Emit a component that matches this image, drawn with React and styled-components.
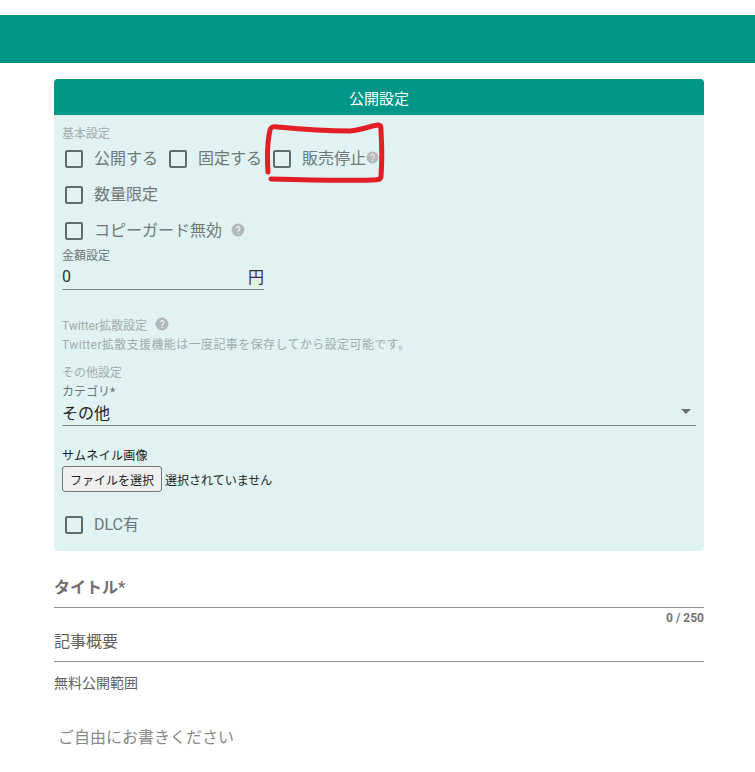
import styled, { createGlobalStyle } from "styled-components";

const GlobalStyle = createGlobalStyle`
	html, body {
		margin: 0;
		padding: 0;
		background: #fff;
		font-family: Roboto, "Noto Sans CJK JP", sans-serif;
	}
`;

const Page = styled.div`
	width: 755px;
	height: 772px;
	overflow: hidden;
	padding-top: 15px;
	box-sizing: border-box;
`;

const TopBar = styled.div`
	height: 48px;
	background: #009688;
`;

const Main = styled.main`
	width: 650px;
	margin: 16px 0 0 54px;
`;

const Settings = styled.section`
	position: relative;
	border-radius: 4px;
	background: #e0f2f1;
`;

const SettingsHeader = styled.h2`
	margin: 0;
	height: 36px;
	display: flex;
	align-items: center;
	justify-content: center;
	border-radius: 4px 4px 0 0;
	background: #009688;
	color: #fff;
	font-size: 15px;
	font-weight: 400;
`;

const SettingsBody = styled.div`
	height: 436px;
	padding: 8px 8px 0;
	box-sizing: border-box;
	display: flex;
	flex-direction: column;
`;

const Muted = styled.div`
	height: 18px;
	margin-top: ${(p) => p.$top || 0}px;
	display: flex;
	align-items: center;
	gap: 8px;
	color: #a2abaa;
	font-size: 12px;
	letter-spacing: ${(p) => p.$spacing || 0}px;
	white-space: nowrap;
`;

const CheckRow = styled.div`
	height: 36px;
	display: flex;
	align-items: center;
	margin-top: ${(p) => p.$top || 0}px;
`;

const Check = styled.label`
	display: flex;
	align-items: center;
	margin-right: ${(p) => p.$right || 0}px;
	color: #6f7877;
	font-size: 16px;
`;

const Box = styled.span`
	width: 14px;
	height: 14px;
	margin: 3px 11px 0 3px;
	border: 2px solid #5d6f6d;
	border-radius: 2px;
	flex: none;
`;

const HelpSlot = styled.span`
	display: flex;
	margin-left: 9px;
	margin-top: 2px;
`;

const FieldLabel = styled.div`
	height: 16px;
	margin-top: ${(p) => p.$top || 0}px;
	color: #6c7473;
	font-size: 12px;
	line-height: 16px;
`;

const PriceField = styled.div`
	width: 202px;
	height: 26px;
	display: flex;
	align-items: center;
	justify-content: space-between;
	padding-bottom: 1px;
	box-sizing: border-box;
	border-bottom: 1px solid #7f8c8b;
	color: #333;
	font-size: 16px;
`;

const SelectField = styled.div`
	width: 634px;
	height: 26px;
	display: flex;
	align-items: center;
	justify-content: space-between;
	padding: 0 5px 2px 0;
	box-sizing: border-box;
	border-bottom: 1px solid #7f8c8b;
	color: #222;
	font-size: 16px;
`;

const Arrow = styled.span`
	width: 0;
	height: 0;
	border-left: 5px solid transparent;
	border-right: 5px solid transparent;
	border-top: 5px solid #6b6f6f;
`;

const ThumbLabel = styled.div`
	height: 16px;
	margin-top: 22px;
	color: #222;
	font-size: 12px;
	letter-spacing: 0.3px;
	line-height: 16px;
`;

const FileRow = styled.div`
	height: 26px;
	margin-top: 2px;
	display: flex;
	align-items: center;
	gap: 3px;
	color: #222;
	font-size: 12px;
`;

const FileButton = styled.button`
	width: 100px;
	height: 26px;
	padding: 0;
	border: 1px solid #767676;
	border-radius: 3px;
	background: #efefef;
	color: #222;
	font-family: inherit;
	font-size: 12px;
`;

const Help = styled.svg`
	width: ${(p) => p.$size || 14}px;
	height: ${(p) => p.$size || 14}px;
	flex: none;
`;

const Scribble = styled.svg`
	position: absolute;
	left: 210px;
	top: 42px;
	width: 125px;
	height: 65px;
	fill: none;
	stroke: #e31e24;
	stroke-width: 5;
	stroke-linecap: round;
	stroke-linejoin: round;
`;

const TitleField = styled.div`
	height: 57px;
	padding-top: 25px;
	box-sizing: border-box;
	border-bottom: 1px solid #8f8f8f;
	color: #6f6f6f;
	font-size: 16px;
	font-weight: 700;
	line-height: 24px;
`;

const Counter = styled.div`
	height: 20px;
	color: #757575;
	font-size: 12px;
	font-weight: 700;
	line-height: 20px;
	text-align: right;
`;

const SummaryField = styled.div`
	height: 34px;
	padding-top: 2px;
	box-sizing: border-box;
	border-bottom: 1px solid #8f8f8f;
	color: #616161;
	font-size: 16px;
	line-height: 24px;
`;

const RangeLabel = styled.div`
	margin-top: 12px;
	color: #616161;
	font-size: 14px;
	line-height: 18px;
`;

const Editor = styled.div`
	margin: 34px 0 0 4px;
	color: #8a8a8a;
	font-size: 16px;
	line-height: 24px;
`;

function HelpIcon({ size }) {
	return (
		<Help $size={size} viewBox="0 0 24 24" aria-hidden="true">
			<circle cx="12" cy="12" r="11" fill="#b4b8b8" />
			<path
				d="M8.8 9.6a3.2 3.2 0 1 1 5 2.6c-1.1.8-1.8 1.3-1.8 2.8"
				fill="none"
				stroke="#e8f2f1"
				strokeWidth="2.2"
			/>
			<circle cx="12" cy="18" r="1.4" fill="#e8f2f1" />
		</Help>
	);
}

function CheckItem({ label, right, children }) {
	return (
		<Check $right={right}>
			<Box />
			{label}
			{children}
		</Check>
	);
}

export default function App() {
	return (
		<Page>
			<GlobalStyle />
			<TopBar />
			<Main>
				<Settings>
					<SettingsHeader>公開設定</SettingsHeader>
					<SettingsBody>
						<Muted>基本設定</Muted>
						<CheckRow $top={-2}>
							<CheckItem label="公開する" right={8} />
							<CheckItem label="固定する" right={8} />
							<CheckItem label="販売停止">
								<HelpIcon size={13} />
							</CheckItem>
						</CheckRow>
						<CheckRow>
							<CheckItem label="数量限定" />
						</CheckRow>
						<CheckRow>
							<CheckItem label="コピーガード無効" />
							<HelpSlot>
								<HelpIcon />
							</HelpSlot>
						</CheckRow>
						<FieldLabel $top={1}>金額設定</FieldLabel>
						<PriceField>
							<span>0</span>
							<span>円</span>
						</PriceField>
						<Muted $top={25}>
							Twitter拡散設定 <HelpIcon />
						</Muted>
						<Muted $top={1} $spacing={0.4}>
							Twitter拡散支援機能は一度記事を保存してから設定可能です。
						</Muted>
						<Muted $top={10}>その他設定</Muted>
						<FieldLabel $top={4}>カテゴリ*</FieldLabel>
						<SelectField>
							<span>その他</span>
							<Arrow />
						</SelectField>
						<ThumbLabel>サムネイル画像</ThumbLabel>
						<FileRow>
							<FileButton type="button">ファイルを選択</FileButton>
							選択されていません
						</FileRow>
						<CheckRow $top={13}>
							<CheckItem label="DLC有" />
						</CheckRow>
					</SettingsBody>
					<Scribble viewBox="0 0 125 65" aria-hidden="true">
						<path d="M4 51C3 36 4 18 6 9C7 6 9 5 14 6C35 8 60 10 86 10C98 9 106 5 114 4C117 4 117 6 117 10C118 26 118 42 117 56C116 59 113 59 108 59C75 60 40 59 7 58" />
					</Scribble>
				</Settings>
				<TitleField>タイトル*</TitleField>
				<Counter>0 / 250</Counter>
				<SummaryField>記事概要</SummaryField>
				<RangeLabel>無料公開範囲</RangeLabel>
				<Editor>ご自由にお書きください</Editor>
			</Main>
		</Page>
	);
}
